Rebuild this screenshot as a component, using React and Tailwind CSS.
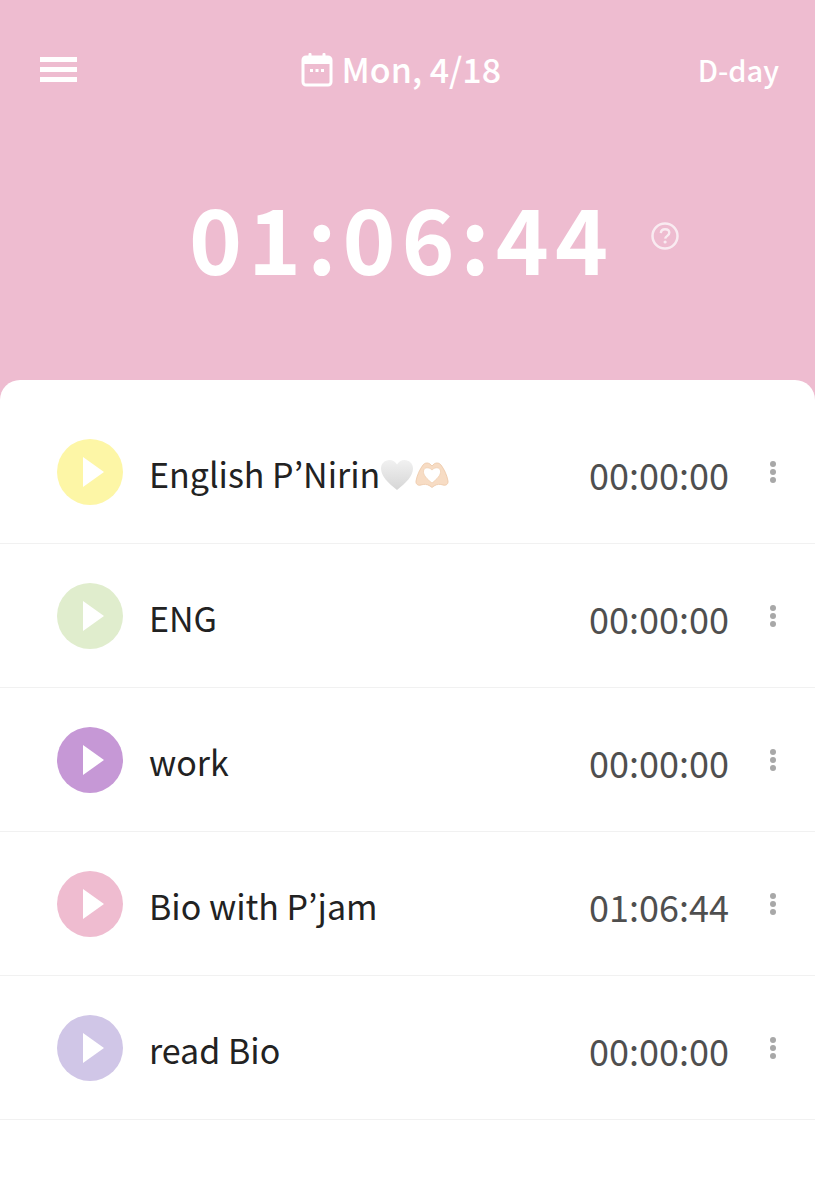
import { Fragment } from 'react';

const subjects = [
  { name: 'English P’Nirin', color: 'bg-[#fdf6a6]', time: '00:00:00', emoji: true },
  { name: 'ENG', color: 'bg-[#e0edcd]', time: '00:00:00' },
  { name: 'work', color: 'bg-[#c698d6]', time: '00:00:00' },
  { name: 'Bio with P’jam', color: 'bg-[#efbcd0]', time: '01:06:44' },
  { name: 'read Bio', color: 'bg-[#d0c6e7]', time: '00:00:00' },
];

function CalendarIcon() {
  return (
    <svg width="32" height="36" viewBox="0 0 32 36" fill="none">
      <rect x="2" y="6" width="28" height="28" rx="3" stroke="white" strokeWidth="3" />
      <rect x="2" y="6" width="28" height="7" fill="white" />
      <rect x="7.5" y="2" width="3" height="6" rx="1" fill="white" />
      <rect x="21.5" y="2" width="3" height="6" rx="1" fill="white" />
      <rect x="9" y="18" width="3" height="3" fill="white" />
      <rect x="14.500" y="18" width="3" height="3" fill="white" />
      <rect x="20" y="18" width="3" height="3" fill="white" />
    </svg>
  );
}

function HelpIcon() {
  return (
    <svg width="30" height="30" viewBox="0 0 30 30" fill="none" className="opacity-70">
      <circle cx="15" cy="15" r="12.500" stroke="white" strokeWidth="2.500" />
      <path d="M10.800 12.200c.2-2.500 2-3.900 4.300-3.900 2.400 0 4.200 1.400 4.200 3.500 0 3-3.800 3-4.100 5.900" stroke="white" strokeWidth="2.400" fill="none" />
      <circle cx="15.100" cy="21" r="1.600" fill="white" />
    </svg>
  );
}

function HeartHands() {
  return (
    <span className="flex items-center mt-[3px]">
      <svg width="34" height="32" viewBox="0 0 34 32">
        <defs>
          <linearGradient id="heart" x1="0" y1="0" x2="0" y2="1">
            <stop offset="0" stopColor="#f1f1f1" />
            <stop offset="1" stopColor="#d6d6d6" />
          </linearGradient>
        </defs>
        <path d="M17 31C8 24 1 17 1 9.500C1 4.500 5 1 9.500 1C12.800 1 15.500 2.800 17 5.500C18.500 2.800 21.200 1 24.500 1C29 1 33 4.500 33 9.500C33 17 26 24 17 31Z" fill="url(#heart)" />
      </svg>
      <svg width="34" height="26" viewBox="0 0 34 26" className="ml-[1px]">
        <path
          d="M1 19C2 13 5 7 8 3C10 .5 13 .5 15 2L17 4L19 2C21 .5 24 .5 26 3C29 7 32 13 33 19C33.500 22 31 24 28 23C25 22 22 22 19 24L17 25.500L15 24C12 22 9 22 6 23C3 24 .5 22 1 19Z"
          fill="#f7dcc4"
          stroke="#ecc7a6"
          strokeWidth="0.800"
        />
        <path d="M17 21C12 17 8 13 8.500 9C9 5.500 13.500 4.500 17 8C20.500 4.500 25 5.500 25.500 9C26 13 22 17 17 21Z" fill="white" stroke="#ecc7a6" strokeWidth="0.600" />
      </svg>
    </span>
  );
}

export default function App() {
  return (
    <div className="w-[815px] h-[1200px] bg-[#eebcd0] overflow-hidden text-white font-['Noto_Sans_CJK_KR','Noto_Sans',sans-serif]">
      <header className="h-[380px] flex flex-col">
        <div className="flex items-center justify-between pl-[40px] pr-[36px] pt-[49px]">
          <div className="flex flex-col gap-[5px] w-[37px]">
            <div className="h-[5px] bg-white" />
            <div className="h-[5px] bg-white" />
            <div className="h-[5px] bg-white" />
          </div>
          <div className="flex items-center gap-[9px] ml-[27px] -mt-[1px]">
            <CalendarIcon />
            <span className="text-[34px] leading-[40px] font-medium">Mon, 4/18</span>
          </div>
          <span className="text-[29px] leading-[40px] font-medium">D-day</span>
        </div>
        <div className="flex items-center justify-center mt-[92px] pl-[54px]">
          <span className="text-[90px] leading-[110px] font-bold tracking-[6px]">01:06:44</span>
          <span className="ml-[36px] flex"><HelpIcon /></span>
        </div>
      </header>
      <main className="h-[820px] bg-white rounded-t-[20px] pt-[20px] text-[#222222]">
        {subjects.map((s) => (
          <Fragment key={s.name}>
            <div className="h-[144px] border-b border-[#f1f1f1] flex items-center pl-[57px] pr-[39px]">
              <div className={`w-[66px] h-[66px] rounded-full ${s.color} flex items-center justify-center`}>
                <div className="w-0 h-0 ml-[6px] border-y-[15px] border-y-transparent border-l-[21px] border-l-white" />
              </div>
              <span className="ml-[26px] text-[34px] leading-[44px] flex items-center mt-[4px]">
                {s.name}
                {s.emoji && <HeartHands />}
              </span>
              <span className="ml-auto text-[36px] leading-[44px] mt-[4px] text-[#4f4f4f]">{s.time}</span>
              <div className="ml-[41px] flex flex-col gap-[2px]">
                <div className="w-[6px] h-[6px] rounded-full bg-[#a8a8a8]" />
                <div className="w-[6px] h-[6px] rounded-full bg-[#a8a8a8]" />
                <div className="w-[6px] h-[6px] rounded-full bg-[#a8a8a8]" />
              </div>
            </div>
          </Fragment>
        ))}
      </main>
    </div>
  );
}
